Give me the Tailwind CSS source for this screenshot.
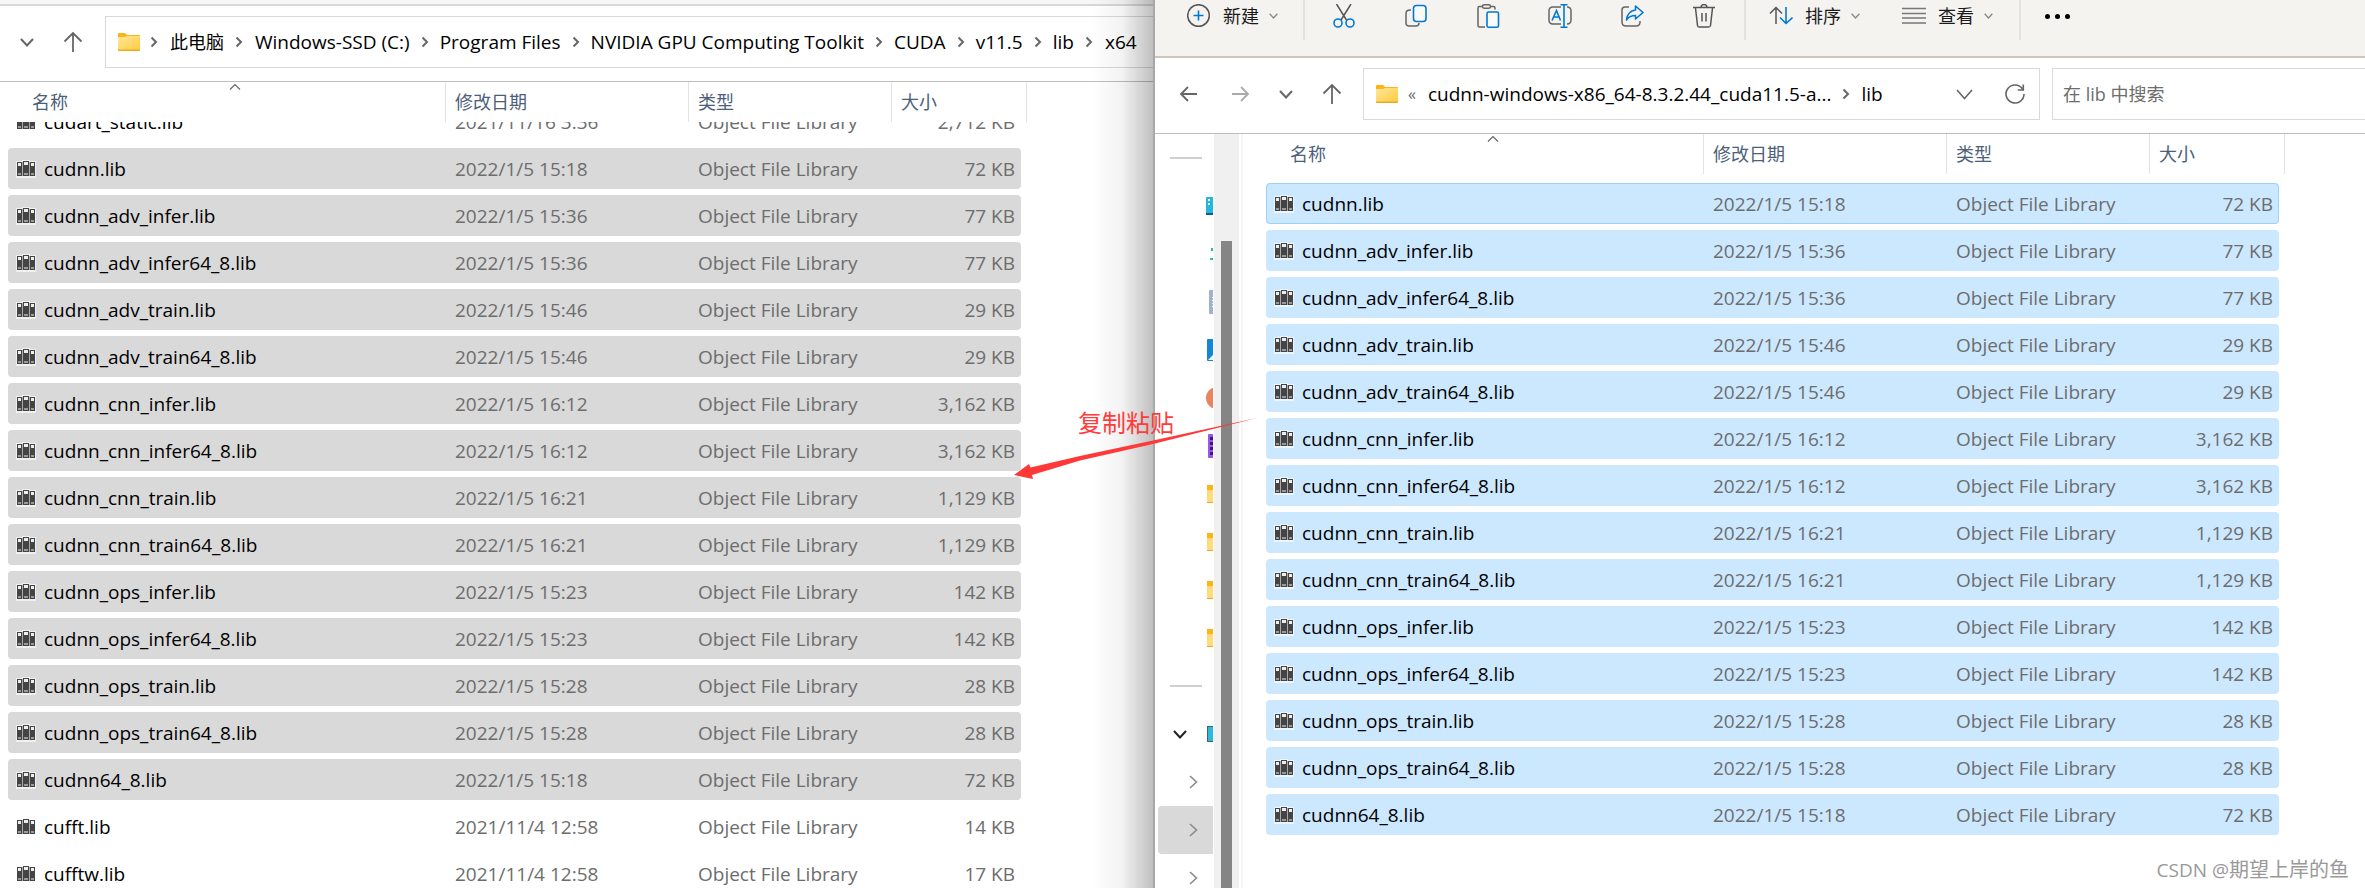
<!DOCTYPE html>
<html lang="zh-CN">
<head>
<meta charset="utf-8">
<title>lib</title>
<script src="https://cdn.jsdelivr.net/npm/@tailwindcss/browser@4"></script>
</head>
<body class="bg-white font-['Open_Sans','Noto_Sans_CJK_SC',sans-serif] text-[19px] leading-7 text-black">
<svg class="absolute size-0">
  <defs><linearGradient id="fg" x1="0" y1="0" x2="1" y2="1"><stop offset="0" stop-color="#ffe69b"/><stop offset="1" stop-color="#ffcc3f"/></linearGradient></defs>
  <symbol id="lib" viewBox="0 0 20 18">
    <path d="M0 1h6V0h8v1h6v17H0z" fill="#fff" fill-opacity=".6"/>
    <path d="M1 2h5v14H1zM7 1h6v15H7zM14 2h5v14h-5z" fill="#444"/>
    <path d="M6 2h1v14H6zM13 2h1v14h-1z" fill="#aaa"/>
    <path d="M2 3h3v3H2zM8 2h4v3H8zM15 3h3v3h-3z" fill="#eee"/>
    <path d="M2 13h3v2H2zM8 13h4v2H8zM15 13h3v2h-3z" fill="#999"/>
  </symbol>
  <symbol id="folder" viewBox="0 0 22 18">
    <path d="M0 1q0-1 1-1h6l2 2h12q1 0 1 1v4H0z" fill="#fcb515"/>
    <path d="M0 4h7l2-1h13v14H0z" fill="url(#fg)"/>
    <path d="M0 16.500h22v.5q0 1-1 1H1q-1 0-1-1z" fill="#e9ab1d"/>
  </symbol>
  <symbol id="sep" viewBox="0 0 8 12"><path d="M1.500 1.500L6 6l-4.500 4.500" fill="none" stroke="#666" stroke-width="2"/></symbol>
  <symbol id="down" viewBox="0 0 14 9"><path d="M1 1l6 6.500L13 1" fill="none" stroke="currentColor" stroke-width="2"/></symbol>
  <symbol id="right" viewBox="0 0 9 14"><path d="M1 1l6.500 6L1 13" fill="none" stroke="#8a8a8a" stroke-width="1.600"/></symbol>
  <symbol id="up" viewBox="0 0 20 22"><path d="M10 21V2M1.500 10.500L10 2l8.500 8.500" fill="none" stroke="#666" stroke-width="1.800"/></symbol>
  <symbol id="caret" viewBox="0 0 12 7"><path d="M1 6.500l5-5 5 5" fill="none" stroke="#666" stroke-width="1.200"/></symbol>
</svg>

<main class="relative grid h-screen grid-cols-[1155fr_1210fr] overflow-hidden">
  <!-- Destination window -->
  <section class="relative flex min-w-0 flex-col overflow-hidden bg-white">
    <div class="h-1.5 shrink-0 border-b-2 border-[#d8d8d8] bg-[#f7f7f7]"></div>
    <div class="flex h-[76px] shrink-0 items-start border-b border-[#bdbdbd] pt-2.5">
      <div class="flex h-[52px] w-[105px] shrink-0 items-center gap-[29px] pl-5">
        <button aria-label="最近" class="text-[#666]"><svg class="h-[9px] w-3.5"><use href="#down"/></svg></button>
        <button aria-label="向上"><svg class="h-[22px] w-5"><use href="#up"/></svg></button>
      </div>
      <nav class="flex h-[52px] min-w-0 flex-1 items-center border border-r-0 border-[#d9d9d9] pl-3 whitespace-nowrap">
        <svg class="h-[18px] w-[22px] shrink-0"><use href="#folder"/></svg>
        <svg class="mr-3 ml-2.5 h-3 w-2 shrink-0"><use href="#sep"/></svg>
        <a href="#" class="text-[18px]">此电脑</a>
        <svg class="mr-3 ml-[11px] h-3 w-2 shrink-0"><use href="#sep"/></svg>
        <a href="#">Windows-SSD (C:)</a>
        <svg class="mx-[11px] h-3 w-2 shrink-0"><use href="#sep"/></svg>
        <a href="#">Program Files</a>
        <svg class="mx-[11px] h-3 w-2 shrink-0"><use href="#sep"/></svg>
        <a href="#">NVIDIA GPU Computing Toolkit</a>
        <svg class="mx-[11px] h-3 w-2 shrink-0"><use href="#sep"/></svg>
        <a href="#">CUDA</a>
        <svg class="mx-[11px] h-3 w-2 shrink-0"><use href="#sep"/></svg>
        <a href="#">v11.5</a>
        <svg class="mx-[11px] h-3 w-2 shrink-0"><use href="#sep"/></svg>
        <a href="#">lib</a>
        <svg class="mr-3 ml-[11px] h-3 w-2 shrink-0"><use href="#sep"/></svg>
        <a href="#">x64</a>
      </nav>
    </div>
    <table class="flex min-h-0 flex-1 flex-col pl-2">
      <thead class="block shrink-0 text-[18px] text-[#4c607a]">
        <tr class="grid h-10 grid-cols-[438px_243px_203px_135px] text-left">
          <th class="relative ml-4 border-r border-[#e2e2e2] pt-1.5 pl-2 font-normal">名称<svg class="absolute top-px left-1/2 h-[7px] w-3 -translate-x-1/2"><use href="#caret"/></svg></th>
          <th class="border-r border-[#e2e2e2] pt-1.5 pl-[9px] font-normal">修改日期</th>
          <th class="border-r border-[#e2e2e2] pt-1.5 pl-[9px] font-normal">类型</th>
          <th class="border-r border-[#e2e2e2] pt-1.5 pl-[9px] font-normal">大小</th>
        </tr>
      </thead>
      <tbody id="left" class="block min-h-0 flex-1 space-y-1.5 overflow-hidden *:first:-mt-[21px]"></tbody>
    </table>
    <div class="pointer-events-none absolute inset-y-0 right-0 w-16 border-r-2 border-[#a8a8a8] bg-linear-to-r from-black/0 via-black/5 to-black/25"></div>
  </section>

  <!-- Source window -->
  <section class="flex min-w-0 flex-col overflow-hidden bg-white">
    <div class="flex h-[58px] shrink-0 items-start border-b-2 border-[#cfc5b9] bg-[#f5f3f0] text-[18px] text-[#1b1b1b]">
      <div class="flex h-10 w-full items-start">
        <button class="flex h-8 w-[148px] items-center pl-8">
          <svg class="h-6 w-6" viewBox="0 0 24 24" fill="none"><circle cx="11.500" cy="11.500" r="10.800" stroke="#555" stroke-width="1.500"/><path d="M11.500 6.500v10M6.500 11.500h10" stroke="#0078d4" stroke-width="1.600"/></svg>
          <span class="ml-3">新建</span>
          <svg class="ml-2.5 h-1.5 w-[9px] text-[#888]" viewBox="0 0 14 9"><use href="#down"/></svg>
        </button>
        <i class="h-10 w-0.5 bg-[#e4e2df]"></i>
        <div class="flex h-8 items-center gap-12 pr-7 pl-[27px]">
          <button aria-label="剪切"><svg class="h-6 w-6" viewBox="0 0 24 24" fill="none"><path d="M4.500 0l10 16M19 0L9 16" stroke="#555" stroke-width="1.500"/><circle cx="6" cy="19" r="4" stroke="#0078d4" stroke-width="1.600"/><circle cx="18" cy="19" r="4" stroke="#0078d4" stroke-width="1.600"/></svg></button>
          <button aria-label="复制"><svg class="h-6 w-6" viewBox="0 0 24 24" fill="none"><path d="M7 6H6Q2 6 2 9.500V19q0 3 3 3h7q3 0 3-3" stroke="#666" stroke-width="1.500"/><rect x="9.500" y="1.500" width="12.500" height="16" rx="3" fill="#fafafa" stroke="#0078d4" stroke-width="1.600"/></svg></button>
          <button aria-label="粘贴"><svg class="h-6 w-6" viewBox="0 0 24 24" fill="none"><path d="M6 2.500H3.500Q2 2.500 2 4v17.500Q2 23 3.500 23H9M15 2.500h2.500Q19 2.500 19 4v1.500" stroke="#666" stroke-width="1.500"/><rect x="6.500" y=".8" width="8" height="3.500" rx="1.700" stroke="#666" stroke-width="1.500"/><rect x="11" y="8" width="11.500" height="15.200" rx="1.500" fill="#fafafa" stroke="#0078d4" stroke-width="1.600"/></svg></button>
          <button aria-label="重命名"><svg class="h-6 w-6" viewBox="0 0 24 24" fill="none"><path d="M13 3H5Q1 3 1 7v9q0 4 4 4h8M19 3q4 0 4 4v9q0 4-4 4" stroke="#666" stroke-width="1.500"/><path d="M16 1v22M12.500 .8h7M12.500 23.200h7M4 16.500L8.500 6.500l4 10M6 13h5" stroke="#0078d4" stroke-width="1.600"/></svg></button>
          <button aria-label="共享"><svg class="h-6 w-6" viewBox="0 0 24 24" fill="none"><path d="M9 3H5Q2 3 2 6v12q0 4 4 4h10q4 0 4-4v-1" stroke="#666" stroke-width="1.500"/><path d="M15.500 2l7.500 6.500-7.500 6.500v-3.500q-6 0-9 4.500 1-9 9-10z" stroke="#0078d4" stroke-width="1.600" stroke-linejoin="round"/></svg></button>
          <button aria-label="删除"><svg class="h-6 w-6" viewBox="0 0 24 24" fill="none"><path d="M1 3.500h22M9 3.500q0-3 3-3t3 3M3.500 4l2 17.500q.2 1.500 2 1.500h9q1.800 0 2-1.500L20.500 4M10 9v8.500M14 9v8.500" stroke="#555" stroke-width="1.500"/></svg></button>
        </div>
        <i class="h-10 w-0.5 bg-[#e4e2df]"></i>
        <button class="flex h-8 items-center pl-[23px]">
          <svg class="h-6 w-6" viewBox="0 0 24 24" fill="none"><path d="M7 20V3.500M1 9.500l6-6 6 6" stroke="#555" stroke-width="1.500"/><path d="M17 3v16.500M11 13.500l6 6 6.500-6" stroke="#0078d4" stroke-width="1.600"/></svg>
          <span class="ml-3">排序</span>
          <svg class="ml-2.5 h-1.5 w-[9px] text-[#888]" viewBox="0 0 14 9"><use href="#down"/></svg>
        </button>
        <button class="flex h-8 items-center pr-[26px] pl-[42px]">
          <svg class="h-6 w-6" viewBox="0 0 24 24" fill="none"><path d="M0 4.500h24M0 9.500h24M0 14h24M0 19h24" stroke="#777" stroke-width="1.500"/></svg>
          <span class="ml-3">查看</span>
          <svg class="ml-2.5 h-1.5 w-[9px] text-[#888]" viewBox="0 0 14 9"><use href="#down"/></svg>
        </button>
        <i class="h-10 w-0.5 bg-[#e4e2df]"></i>
        <button aria-label="更多" class="flex h-8 items-center gap-[5px] pl-6"><i class="size-[5px] rounded-full bg-black"></i><i class="size-[5px] rounded-full bg-black"></i><i class="size-[5px] rounded-full bg-black"></i></button>
      </div>
    </div>
    <div class="flex h-[76px] shrink-0 items-start border-b border-[#bdbdbd] pt-2.5">
      <div class="flex h-[52px] w-[208px] shrink-0 items-center pl-6">
        <button aria-label="后退"><svg class="h-4 w-[18px]" viewBox="0 0 18 16" fill="none"><path d="M18 8H2M9 1L2 8l7 7" stroke="#666" stroke-width="1.800"/></svg></button>
        <button aria-label="前进" class="ml-[35px]"><svg class="h-4 w-[18px]" viewBox="0 0 18 16" fill="none"><path d="M0 8h16M9 1l7 7-7 7" stroke="#aaa" stroke-width="1.800"/></svg></button>
        <button aria-label="最近" class="ml-[29px] text-[#666]"><svg class="h-[9px] w-3.5"><use href="#down"/></svg></button>
        <button aria-label="向上" class="ml-[29px]"><svg class="h-[22px] w-5"><use href="#up"/></svg></button>
      </div>
      <nav class="flex h-[52px] min-w-0 flex-1 items-center border border-[#d9d9d9] pr-3.5 pl-3 whitespace-nowrap">
        <svg class="h-[18px] w-[22px] shrink-0"><use href="#folder"/></svg>
        <span class="mr-3 ml-2.5 text-[16px] text-[#666]">«</span>
        <a href="#">cudnn-windows-x86_64-8.3.2.44_cuda11.5-a...</a>
        <svg class="mx-[11px] h-3 w-2 shrink-0"><use href="#sep"/></svg>
        <a href="#">lib</a>
        <button aria-label="展开" class="ml-auto text-[#666]"><svg class="h-[11px] w-[17px]" viewBox="0 0 17 11" fill="none"><path d="M1 1l7.500 8.500L16 1" stroke="currentColor" stroke-width="1.600"/></svg></button>
        <button aria-label="刷新" class="ml-8"><svg class="size-5" viewBox="0 0 20 20" fill="none"><path d="M17.500 5A9 9 0 1 0 19 10M18.300 .5v5.500h-5.500" stroke="#666" stroke-width="1.600"/></svg></button>
      </nav>
      <input type="text" aria-label="搜索" placeholder="在 lib 中搜索" class="ml-3 h-[52px] w-[313px] shrink-0 border border-r-0 border-[#d9d9d9] pl-2.5 text-[18px] placeholder:text-[#6d6d6d]">
    </div>
    <div class="flex min-h-0 flex-1">
      <aside class="flex w-[59px] shrink-0 flex-col overflow-hidden *:flex *:h-12 *:shrink-0 *:items-center *:justify-end">
        <div><i class="mr-3 h-0.5 w-8 bg-[#d0d0d0]"></i></div>
        <div><svg class="mr-px h-[18px] w-[7px]"><rect width="9" height="18" rx="1" fill="#24b7dc"/><rect y="16" width="9" height="2" fill="#0b5f8a"/><path d="M2 2h2v2H2zM2 6h2v2H2z" fill="#fff"/></svg></div>
        <div><svg class="mr-px h-4 w-[3px]"><path d="M1 2h2v3H1zM0 12h3v2H0z" fill="#2fc08a"/></svg></div>
        <div><svg class="mr-px h-6 w-1"><rect width="6" height="24" rx="1" fill="#9fb2cc"/><path d="M3 7h1v1H3zM3 10h1v1H3zM3 13h1v1H3zM3 16h1v1H3z" fill="#fff"/></svg></div>
        <div><svg class="mr-px h-[22px] w-1.5"><rect width="8" height="22" rx="1" fill="#1585d6"/><path d="M1 21l5-5v5z" fill="#fff"/></svg></div>
        <div><svg class="mr-px h-[22px] w-[7px]"><circle cx="11" cy="11" r="11" fill="#e8845f"/></svg></div>
        <div><svg class="mr-px h-6 w-[5px]"><rect width="8" height="24" rx="1" fill="#9a55ea"/><path d="M2 3h3v3H2zM2 8h3v3H2zM2 13h3v3H2zM2 18h3v3H2z" fill="#3c1a70"/></svg></div>
        <div><svg class="mr-px h-[18px] w-1.5"><rect width="6" height="18" fill="#ffdb7a"/><rect width="6" height="5" fill="#fcb515"/><rect y="17" width="6" height="1" fill="#e9ab1d"/></svg></div>
        <div><svg class="mr-px h-[18px] w-1.5"><rect width="6" height="18" fill="#ffdb7a"/><rect width="6" height="5" fill="#fcb515"/><rect y="17" width="6" height="1" fill="#e9ab1d"/></svg></div>
        <div><svg class="mr-px h-[18px] w-1.5"><rect width="6" height="18" fill="#ffdb7a"/><rect width="6" height="5" fill="#fcb515"/><rect y="17" width="6" height="1" fill="#e9ab1d"/></svg></div>
        <div><svg class="mr-px h-[18px] w-1.5"><rect width="6" height="18" fill="#ffdb7a"/><rect width="6" height="5" fill="#fcb515"/><rect y="17" width="6" height="1" fill="#e9ab1d"/></svg></div>
        <div><i class="mr-3 h-0.5 w-8 bg-[#d0d0d0]"></i></div>
        <div><svg class="mr-5 h-[9px] w-3.5 text-[#222]"><use href="#down"/></svg><svg class="mr-px h-4 w-1.5"><rect x=".5" y=".5" width="8" height="15" fill="#2bb9dd" stroke="#42606e"/></svg></div>
        <div class="pr-4"><svg class="h-3.5 w-[9px]"><use href="#right"/></svg></div>
        <div class="mr-px ml-[3px] rounded-l-sm bg-[#d9d9d9] pr-[15px]"><svg class="h-3.5 w-[9px]"><use href="#right"/></svg></div>
        <div class="pr-4"><svg class="h-3.5 w-[9px]"><use href="#right"/></svg></div>
      </aside>
      <div class="w-[25px] shrink-0 bg-[#f0f0f0] px-[7px] pt-[107px]"><div class="h-full bg-[#858585]"></div></div>
      <div class="ml-0.5 w-0.5 shrink-0 bg-[#f6f6f6]"></div>
      <table class="block min-w-0 flex-1 pl-[23px]">
        <thead class="block text-[18px] text-[#4c607a]">
          <tr class="grid h-10 grid-cols-[438px_243px_203px_135px] text-left">
            <th class="relative ml-4 border-r border-[#e2e2e2] pt-1.5 pl-2 font-normal">名称<svg class="absolute top-px left-1/2 h-[7px] w-3 -translate-x-1/2"><use href="#caret"/></svg></th>
            <th class="border-r border-[#e2e2e2] pt-1.5 pl-[9px] font-normal">修改日期</th>
            <th class="border-r border-[#e2e2e2] pt-1.5 pl-[9px] font-normal">类型</th>
            <th class="border-r border-[#e2e2e2] pt-1.5 pl-[9px] font-normal">大小</th>
          </tr>
        </thead>
        <tbody id="right-list" class="block space-y-1.5 pt-[9px]"></tbody>
      </table>
    </div>
  </section>

  <!-- Annotation -->
  <svg class="pointer-events-none absolute top-[410px] left-[1010px] h-20 w-[250px]" viewBox="1010 410 250 80"><path d="M1014 475L1029 464l1.500 3.500L1080 456l73-15.500 104-22.500-104 26-73 16.500-48 14.500 1 4z" fill="#ff3838"/></svg>
  <p class="absolute top-[409px] left-[1078px] text-[24px] leading-7 text-[#ff3b3b]">复制粘贴</p>
  <p class="absolute right-4 bottom-1 font-['Open_Sans','Noto_Sans_CJK_SC',sans-serif] text-[20px] leading-7 text-[#999]"><span class="text-[19px]">CSDN @</span>期望上岸的鱼</p>
</main>
<script>
const libs = [
  ['cudnn.lib', '2022/1/5 15:18', '72 KB'],
  ['cudnn_adv_infer.lib', '2022/1/5 15:36', '77 KB'],
  ['cudnn_adv_infer64_8.lib', '2022/1/5 15:36', '77 KB'],
  ['cudnn_adv_train.lib', '2022/1/5 15:46', '29 KB'],
  ['cudnn_adv_train64_8.lib', '2022/1/5 15:46', '29 KB'],
  ['cudnn_cnn_infer.lib', '2022/1/5 16:12', '3,162 KB'],
  ['cudnn_cnn_infer64_8.lib', '2022/1/5 16:12', '3,162 KB'],
  ['cudnn_cnn_train.lib', '2022/1/5 16:21', '1,129 KB'],
  ['cudnn_cnn_train64_8.lib', '2022/1/5 16:21', '1,129 KB'],
  ['cudnn_ops_infer.lib', '2022/1/5 15:23', '142 KB'],
  ['cudnn_ops_infer64_8.lib', '2022/1/5 15:23', '142 KB'],
  ['cudnn_ops_train.lib', '2022/1/5 15:28', '28 KB'],
  ['cudnn_ops_train64_8.lib', '2022/1/5 15:28', '28 KB'],
  ['cudnn64_8.lib', '2022/1/5 15:18', '72 KB'],
];
const row = ([name, date, size], look) => `<tr class="grid h-[41px] w-[1013px] grid-cols-[437px_243px_203px_130px] items-center rounded-sm text-[#6d6d6d] ${look}">
  <td class="flex items-center pl-2 text-black"><svg class="mr-2 h-[18px] w-5"><use href="#lib"/></svg>${name}</td>
  <td class="pl-2.5">${date}</td><td class="pl-2.5">Object File Library</td><td class="pr-1.5 text-right">${size}</td></tr>`;
const grey = 'bg-[#d9d9d9]', blue = 'bg-[#cce8ff]', focus = 'bg-[#cce8ff] outline outline-1 -outline-offset-1 outline-[#99d1ff]';
document.getElementById('left').innerHTML =
  row(['cudart_static.lib', '2021/11/16 3:36', '2,712 KB'], '') +
  libs.map(f => row(f, grey)).join('') +
  row(['cufft.lib', '2021/11/4 12:58', '14 KB'], '') +
  row(['cufftw.lib', '2021/11/4 12:58', '17 KB'], '');
document.getElementById('right-list').innerHTML = libs.map((f, i) => row(f, i ? blue : focus)).join('');
</script>
</body>
</html>
